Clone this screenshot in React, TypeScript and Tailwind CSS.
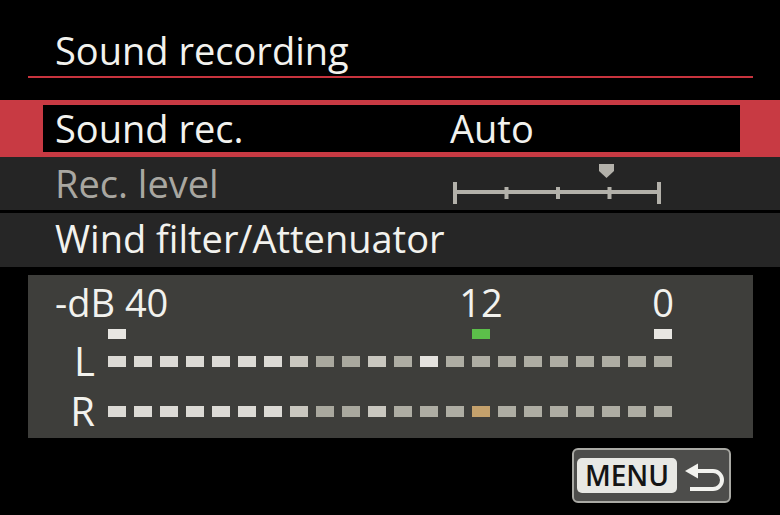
import React from "react";

type Tone = "hi" | "mid" | "lo" | "dim" | "peak" | "amber";

const toneClass: Record<Tone, string> = {
  hi: "bg-[#dcdad5]",
  mid: "bg-[#c9c7bf]",
  lo: "bg-[#a9a89e]",
  dim: "bg-[#aeada3]",
  peak: "bg-[#e4e2de]",
  amber: "bg-[#c4a16c]",
};

const leftLevels: Tone[] = [
  "hi", "hi", "hi", "hi", "hi", "hi", "hi", "mid", "lo", "lo", "mid",
  "dim", "peak", "dim", "dim", "dim", "dim", "dim", "dim", "dim", "dim", "dim",
];

const rightLevels: Tone[] = [
  "hi", "hi", "hi", "hi", "hi", "hi", "hi", "mid", "lo", "lo", "mid",
  "dim", "dim", "dim", "amber", "dim", "dim", "dim", "dim", "dim", "dim", "dim",
];

const cells = Array.from({ length: 22 }, (_, i) => i);

const LevelSlider = () => (
  <svg width="215" height="53" viewBox="0 0 215 53" className="block">
    <g fill="#b3b1aa">
      <rect x="3" y="33" width="208" height="4" />
      <rect x="3" y="25" width="4" height="22" />
      <rect x="207" y="25" width="4" height="22" />
      <rect x="54.5" y="30" width="4" height="12" />
      <rect x="106" y="30" width="4" height="12" />
      <rect x="157.5" y="30" width="4" height="12" />
      <polygon points="149,7 164,7 164,14 156.5,21 149,14" />
    </g>
  </svg>
);

const ReturnArrow = () => (
  <svg width="42" height="32" viewBox="0 0 42 32" className="block">
    <polygon points="0,11 13,3.5 13,18.5" fill="#f2f2ee" />
    <path d="M12 11 H28 A9 9 0 0 1 28 29 H5" fill="none" stroke="#f2f2ee" strokeWidth="4" />
  </svg>
);

const MeterRow = ({ label, levels }: { label: string; levels: Tone[] }) => (
  <div className="flex items-center h-[40px]">
    <div className="w-[80px] pr-[13px] text-right text-[40px] leading-[40px]">{label}</div>
    <div className="flex gap-[8px]">
      {levels.map((t, i) => (
        <div key={i} className={`w-[18px] h-[11px] ${toneClass[t]}`} />
      ))}
    </div>
  </div>
);

export default function App() {
  return (
    <div className="w-[780px] h-[515px] bg-black text-[#f2f2ee] overflow-hidden font-['Open_Sans',sans-serif] text-[38px] font-medium">
      {/* header */}
      <div className="h-[76px] pt-[31px] pl-[55px] leading-[38px]">Sound recording</div>
      <div className="ml-[28px] w-[725px] h-[2px] bg-[#c8343e]" />
      <div className="h-[22px]" />

      {/* selected item */}
      <div className="h-[57px] bg-[#c83a43] pt-[5px] pl-[43px]">
        <div className="w-[697px] h-[47px] bg-black flex items-center pl-[12px] leading-[47px]">
          <span className="w-[395px]">Sound rec.</span>
          <span>Auto</span>
        </div>
      </div>

      <div className="h-[53px] bg-[#252525] flex items-center pl-[55px] leading-[53px] text-[#a9a7a1]">
        <span className="w-[395px]">Rec. level</span>
        <LevelSlider />
      </div>
      <div className="h-[3px]" />
      <div className="h-[54px] bg-[#262626] pl-[55px] leading-[50px]">Wind filter/Attenuator</div>
      <div className="h-[8px]" />

      {/* level meter */}
      <div className="ml-[28px] w-[725px] h-[163px] bg-[#3e3e3b] pt-[8px]">
        <div className="flex h-[38px] leading-[38px]">
          <div className="w-[80px] pl-[27px] whitespace-nowrap">-dB 40</div>
          <div className="flex gap-[8px]">
            {cells.map((i) => (
              <div key={i} className="w-[18px] flex justify-center whitespace-nowrap">
                {i === 14 ? "12" : i === 21 ? "0" : ""}
              </div>
            ))}
          </div>
        </div>
        <div className="flex mt-[8px] h-[10px]">
          <div className="w-[80px]" />
          <div className="flex gap-[8px]">
            {cells.map((i) => (
              <div
                key={i}
                className={`w-[18px] h-[10px] ${
                  i === 14 ? "bg-[#5cbf4a]" : i === 0 || i === 21 ? "bg-[#e8e6e2]" : ""
                }`}
              />
            ))}
          </div>
        </div>
        <div className="mt-[2px]">
          <MeterRow label="L" levels={leftLevels} />
        </div>
        <div className="mt-[10px]">
          <MeterRow label="R" levels={rightLevels} />
        </div>
      </div>

      {/* footer */}
      <div className="flex justify-end pr-[49px] mt-[10px]">
        <div className="w-[159px] h-[55px] border-2 border-[#a9a9a4] rounded-[6px] bg-[#4d4d4b] flex items-center pl-[3px]">
          <div className="w-[100px] h-[35px] rounded-[5px] bg-[#e8e8e4] text-[#141414] text-[28px] font-semibold leading-[35px] flex justify-center">
            MENU
          </div>
          <div className="ml-[8px]">
            <ReturnArrow />
          </div>
        </div>
      </div>
    </div>
  );
}
